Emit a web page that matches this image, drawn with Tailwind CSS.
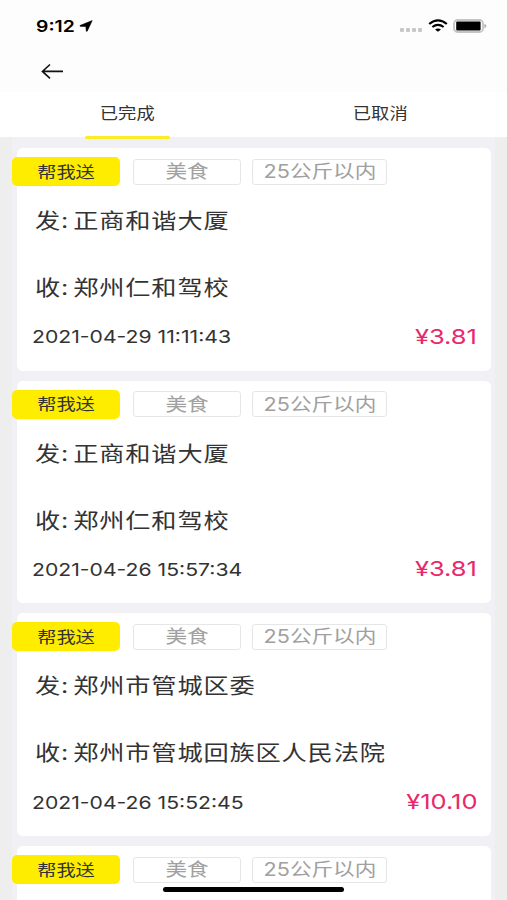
<!DOCTYPE html>
<html lang="zh-CN">
<head>
  <meta charset="UTF-8">
  <meta name="viewport" content="width=device-width, initial-scale=1.0">
  <title>订单列表</title>
  <script src="https://cdn.jsdelivr.net/npm/@tailwindcss/browser@4"></script>
</head>
<body class="h-[900px] overflow-hidden bg-[#eeeeee] font-[Inter,'Noto_Sans_CJK_SC',sans-serif] text-[#333333]">
  <!-- Status bar -->
  <header class="h-[92px] bg-[#fdfdfd]">
    <div class="flex h-[51px] items-center pl-[36px] pr-[20px]">
      <span class="inline-block origin-left scale-x-[1.21] text-[16px] font-semibold leading-none text-black">9:12</span>
      <svg class="ml-[11px]" width="14" height="12" viewBox="0 0 14 12"><path d="M13.2 .6 8.2 11.2 7.3 11.2 6.9 6.6 1 6.3 1 5.5Z" fill="#000" stroke="#000" stroke-width=".6" stroke-linejoin="round"/></svg>
      <div class="ml-auto flex items-center">
        <div class="mr-[6px] mt-[8px] flex gap-[2px]">
          <i class="size-[4px] rounded-[1px] bg-[#c8c8c8]"></i>
          <i class="size-[4px] rounded-[1px] bg-[#c8c8c8]"></i>
          <i class="size-[4px] rounded-[1px] bg-[#c8c8c8]"></i>
          <i class="size-[4px] rounded-[1px] bg-[#c8c8c8]"></i>
        </div>
        <svg width="20" height="13" viewBox="0 0 20 13" fill="none" stroke="#000" stroke-width="2.2">
          <path d="M1.2 5Q10-2.3 18.8 5"/>
          <path d="M4.4 8Q10 3.6 15.6 8"/>
          <path d="M7 10.5Q10 8.3 13 10.5L10 12.8Z" fill="#000" stroke="none"/>
        </svg>
        <svg class="ml-[5px]" width="34" height="14" viewBox="0 0 34 14">
          <rect x="1" y="1" width="29" height="12" rx="3.5" fill="#fdfdfd" stroke="#c4c4c4" stroke-width="1.8"/>
          <rect x="3.2" y="2.6" width="24.4" height="8.8" rx="1" fill="#000"/>
          <path d="M31.4 5Q33.4 5.5 33.4 7T31.4 9Z" fill="#aaa"/>
        </svg>
      </div>
    </div>
    <svg class="ml-[41px] mt-[12px]" width="23" height="16" viewBox="0 0 23 16" fill="none" stroke="#111" stroke-width="1.6"><path d="M9 1.5 1.4 8.4 9 15.3M1.2 8.4H22"/></svg>
  </header>

  <!-- Tabs -->
  <nav class="flex h-[45px] bg-white">
    <div class="relative z-10 flex w-[254px] flex-col items-center">
      <span class="mt-[11px] inline-block scale-x-[1.18] text-[15.5px] leading-[22px]">已完成</span>
      <i class="mt-auto -mb-[2px] h-[3px] w-[85px] shrink-0 rounded-full bg-[#fbec2b]"></i>
    </div>
    <div class="flex w-[253px] justify-center">
      <span class="mt-[11px] inline-block scale-x-[1.18] text-[15.5px] leading-[22px]">已取消</span>
    </div>
  </nav>

  <!-- Orders -->
  <main id="orders" class="mx-[12px] flex h-[763px] flex-col gap-[10px] overflow-hidden bg-[#f1f1f5] pl-[5px] pr-[4px] pt-[11px]"></main>

  <!-- Home indicator -->
  <div class="absolute left-[163px] top-[887px] h-[5px] w-[181px] rounded-full bg-black"></div>

  <script>
    const orders = [
      { from: "正商和谐大厦", to: "郑州仁和驾校", time: "2021-04-29 11:11:43", price: "¥3.81" },
      { from: "正商和谐大厦", to: "郑州仁和驾校", time: "2021-04-26 15:57:34", price: "¥3.81" },
      { from: "郑州市管城区委", to: "郑州市管城回族区人民法院", time: "2021-04-26 15:52:45", price: "¥10.10" },
    ];

    const tags = `
        <div class="-ml-[5px] flex items-center pt-[9px]">
          <span class="flex h-[29px] w-[108px] items-center justify-center rounded-[5px] bg-[#ffed00]">
            <b class="scale-x-[1.2] text-[16px] font-normal leading-none">帮我送</b>
          </span>
          <span class="ml-[13px] flex h-[26px] w-[108px] items-center justify-center rounded-[3px] border border-[#e6e6e6] pt-px text-[#a0a0a0]">
            <b class="scale-x-[1.2] text-[18px] font-normal leading-none">美食</b>
          </span>
          <span class="ml-[11px] flex h-[26px] w-[135px] items-center justify-center rounded-[3px] border border-[#e6e6e6] pt-px text-[#a0a0a0]">
            <b class="scale-x-[1.2] whitespace-nowrap text-[18px] font-normal leading-none">25公斤以内</b>
          </span>
        </div>`;

    const cards = orders.map((o) => `
      <section class="h-[222.7px] w-[474px] shrink-0 rounded-[6px] bg-white">
        ${tags}
        <div class="flex h-[67px] items-center pl-[18px] pt-[2px]">
          <p class="origin-left scale-x-[1.2] whitespace-nowrap text-[21px] leading-none tracking-[0.7px] [word-spacing:-3.2px]">发: ${o.from}</p>
        </div>
        <div class="flex h-[67px] items-center pl-[18px] pt-[2px]">
          <p class="origin-left scale-x-[1.2] whitespace-nowrap text-[21px] leading-none tracking-[0.7px] [word-spacing:-3.2px]">收: ${o.to}</p>
        </div>
        <div class="flex h-[33px] items-center justify-between pl-[15px] pr-[14px] pt-px">
          <span class="origin-left scale-x-[1.21] whitespace-nowrap text-[17.5px] leading-none">${o.time}</span>
          <span class="origin-right scale-x-[1.24] whitespace-nowrap text-[20.5px] leading-none text-[#e8286b]">${o.price}</span>
        </div>
      </section>`).join("");

    // The next order peeks in at the bottom of the list
    document.getElementById("orders").innerHTML = cards + `
      <section class="h-[54px] w-[474px] shrink-0 rounded-t-[6px] bg-white">${tags}</section>`;
  </script>
</body>
</html>
